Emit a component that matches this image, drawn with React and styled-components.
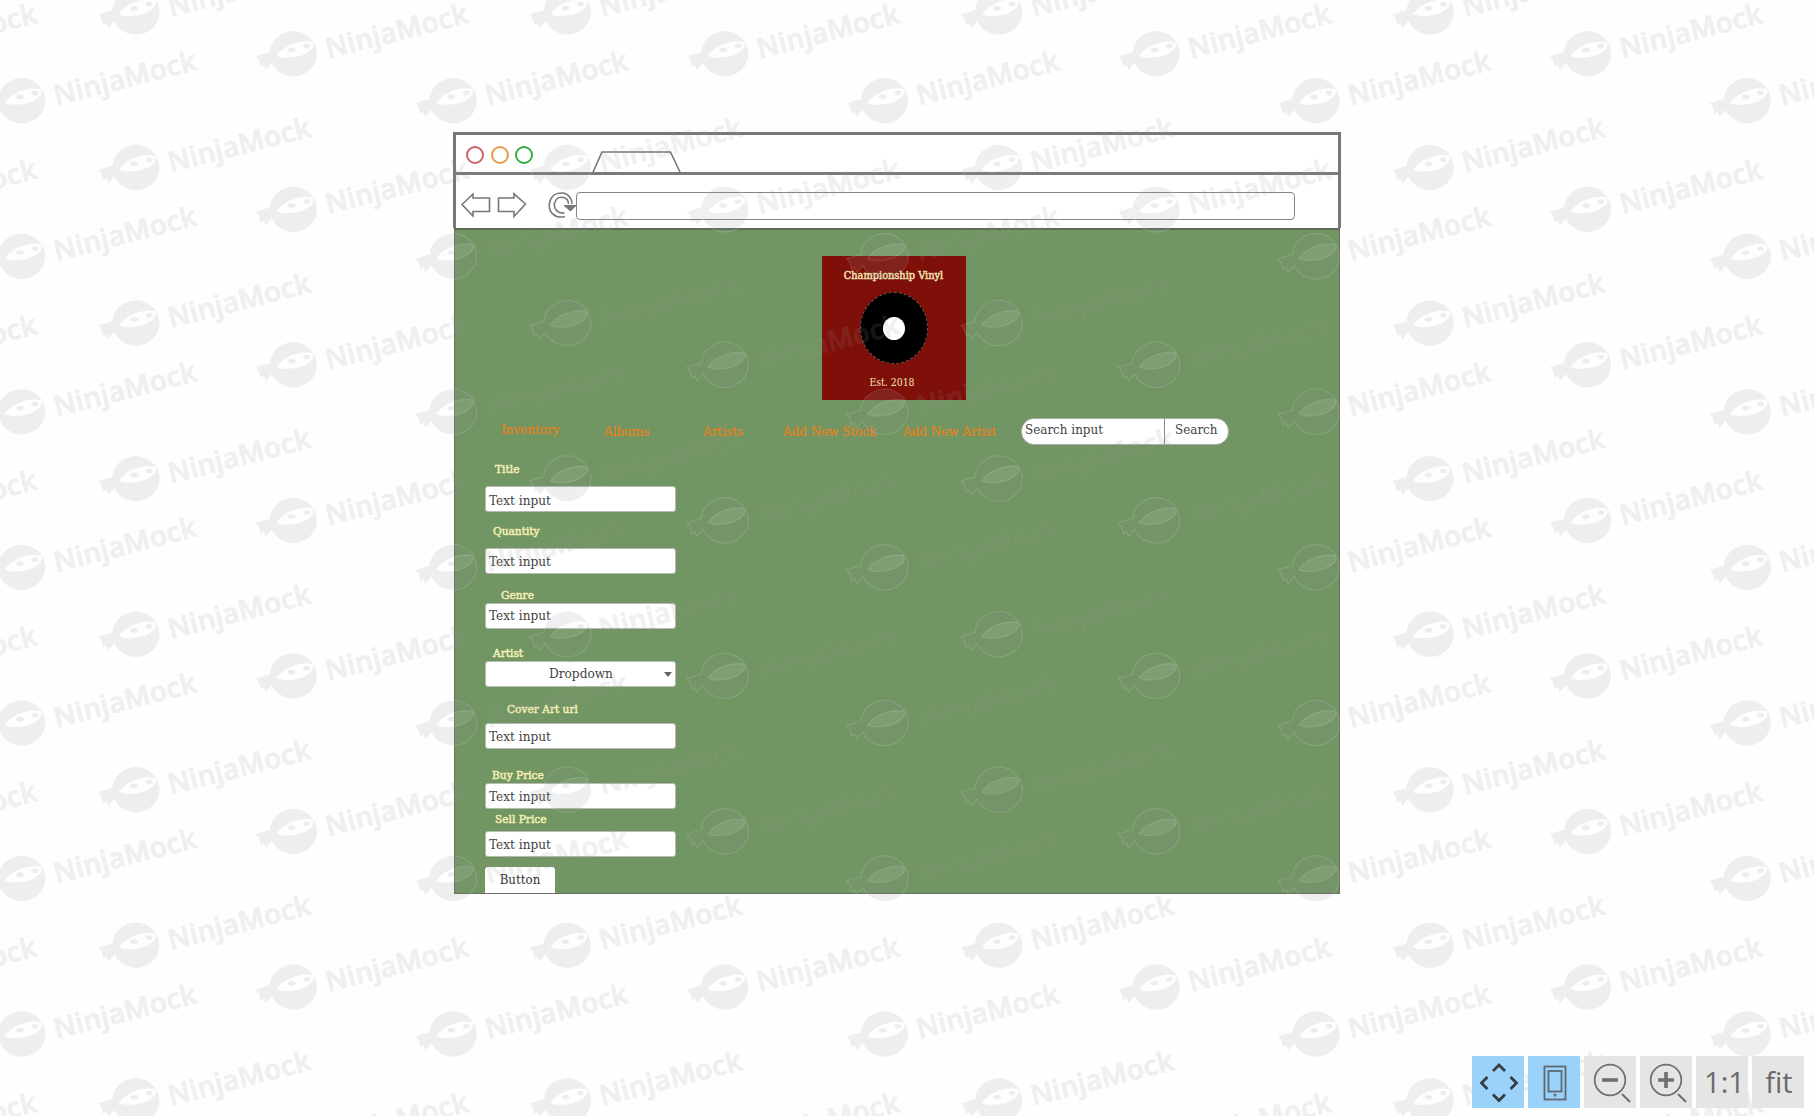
import React from 'react';
import styled, { createGlobalStyle } from 'styled-components';

const serif = '"DejaVu Serif Condensed", "DejaVu Serif", serif';

const GlobalStyle = createGlobalStyle`
  * { box-sizing: border-box; }
  html, body { margin: 0; background: #fefefe; }
  body { overflow: hidden; }
`;

const Page = styled.main`
  position: relative;
  width: 1814px;
  height: 1116px;
  overflow: hidden;
  padding: 132px 0 0 453px;
  font-family: ${serif};
  font-stretch: semi-condensed;
`;

const Browser = styled.section`
  width: 888px;
  display: flex;
  flex-direction: column;
`;

const Chrome = styled.header`
  background: #fff;
  border: 3px solid #777;
  border-bottom: 0;
  height: 96px;
`;

const TabStrip = styled.div`
  height: 40px;
  border-bottom: 3px solid #7b7b7b;
  display: flex;
  align-items: center;
  gap: 6.5px;
  padding: 3px 0 0 10px;
`;

const Dot = styled.span`
  width: 18px;
  height: 18px;
  border-radius: 50%;
  border: 2.5px solid ${(p) => p.$color};
`;

const TabShape = styled.svg`
  width: 90px;
  height: 22px;
  margin-left: 52px;
  align-self: flex-end;
`;

const AddressRow = styled.div`
  height: 53px;
  display: flex;
  align-items: flex-start;
  padding: 17px 0 0 4px;
`;

const NavArrows = styled.svg`
  width: 116px;
  height: 28px;
`;

const AddressBar = styled.div`
  width: 719px;
  height: 28px;
  border: 1.5px solid #858585;
  border-radius: 4px;
`;

const Site = styled.div`
  width: 886px;
  height: 666px;
  margin-left: 1px;
  background: #719563;
  border: 1px solid #657060;
  border-top: 2px solid #5d6b58;
  display: flex;
  flex-direction: column;
  padding: 26px 0 0 30px;
`;

const Logo = styled.div`
  width: 144px;
  height: 144px;
  margin-left: 337px;
  background: #7e0f09;
  color: #f3e3b3;
  display: flex;
  flex-direction: column;
  align-items: center;
`;

const LogoName = styled.div`
  margin: 12px 0 0 -1px;
  font-size: 10.9px;
  line-height: 16px;
  white-space: nowrap;
  -webkit-text-stroke: 0.45px #f3e3b3;
`;

const Record = styled.div`
  width: 68px;
  height: 72px;
  margin-top: 8px;
  border-radius: 50%;
  background: #000;
  border: 1px dashed #6b5b58;
  display: flex;
  align-items: center;
  justify-content: center;
  flex: none;
`;

const RecordHole = styled.span`
  width: 22px;
  height: 23px;
  border-radius: 50%;
  background: #fff;
`;

const LogoYear = styled.div`
  margin: 10px 0 0 -4px;
  font-size: 10.4px;
  line-height: 16px;
`;

const Nav = styled.nav`
  display: grid;
  grid-template-columns: 103px 99px 80px 120px 118px 208px;
  height: 27px;
  margin: 17px 0 0 16px;
  color: #e8811a;
  font-size: 13.3px;
  line-height: 16px;
`;

const NavLink = styled.span`
  padding-top: ${(p) => (p.$raised ? 5 : 7)}px;
  white-space: nowrap;
  -webkit-text-stroke: 0.2px #e8811a;
`;

const SearchBox = styled.div`
  height: 27px;
  margin-top: 1px;
  display: flex;
  background: #fff;
  border: 1px solid #a5b09f;
  border-radius: 13px;
  color: #444;
  overflow: hidden;
`;

const SearchInput = styled.span`
  width: 143px;
  padding: 3px 0 0 3px;
  border-right: 1px solid #888;
`;

const SearchButton = styled.span`
  flex: 1;
  padding: 3px 0 0 10px;
`;

const Form = styled.form`
  display: flex;
  flex-direction: column;
  align-items: flex-start;
  padding-top: 16px;
`;

const Label = styled.label`
  height: 16px;
  padding-top: 1px;
  margin: ${(p) => p.$before}px 0 ${(p) => p.$after}px ${(p) => p.$indent}px;
  font-size: 11.8px;
  line-height: 16px;
  color: #f4efb4;
  -webkit-text-stroke: 0.5px #f4efb4;
  white-space: nowrap;
`;

const Field = styled.div`
  width: 191px;
  height: 26px;
  display: flex;
  align-items: flex-start;
  background: #fff;
  border: 1px solid #b4bdaf;
  border-radius: 3px;
  padding: ${(p) => p.$top}px 3px 0;
  font-size: 13.5px;
  line-height: 16px;
  color: #444;
`;

const DropdownText = styled.span`
  flex: 1;
  padding-left: 60px;
`;

const Caret = styled.span`
  margin: 7px 0 0;
  border: 4.5px solid transparent;
  border-top: 5px solid #666;
  border-bottom: 0;
`;

const SubmitButton = styled.div`
  width: 70px;
  height: 26px;
  margin-top: 10px;
  background: #fff;
  border-radius: 3px 3px 0 0;
  color: #333;
  font-size: 13.2px;
  line-height: 16px;
  padding-top: 5px;
  text-align: center;
`;

const WatermarkLayer = styled.svg`
  position: absolute;
  inset: 0;
  pointer-events: none;
`;

const WatermarkText = styled.text`
  font: 600 28px "Open Sans", "Noto Sans", sans-serif;
  fill: #969696;
  stroke: #969696;
  stroke-width: 0.9px;
  opacity: 0.135;
`;

const Toolbar = styled.div`
  position: absolute;
  right: 10px;
  bottom: 8px;
  display: flex;
  gap: 4px;
`;

const Tool = styled.div`
  width: 52px;
  height: 52px;
  background: ${(p) => (p.$active ? '#9bd2fa' : '#e5e5e5')};
  display: flex;
  align-items: center;
  justify-content: center;
  color: #6a6a6a;
  font: 400 29px/52px "Open Sans", "Noto Sans", sans-serif;
  padding-left: ${(p) => p.$shift || 0}px;
  white-space: nowrap;
`;

const PERIOD_X = 431.4;
const PERIOD_Y = 155.55;
const SEEDS = [[20, 101], [134.2, 167.8], [291.7, 54]];

const marks = [];
for (let col = -1; col < 5; col += 1) {
  for (let row = -2; row < 8; row += 1) {
    SEEDS.forEach(([seedX, seedY]) => {
      const x = seedX + col * PERIOD_X;
      const y = seedY + row * PERIOD_Y;
      if (x > -175 && x < 1850 && y > -20 && y < 1150) {
        marks.push({ x, y, hasText: x < 1775 });
      }
    });
  }
}

const BAND = 'M-15 2C-11 -6 6 -15 21 -12C24 -8 18 -2 11 1C2 4 -8 5 -15 2Z';

function Watermark() {
  return (
    <WatermarkLayer width="1814" height="1116">
      <defs>
        <g id="ninja">
          <path
            d={`M-22 -2L-36 2L-33 6L-31 13L-28 11L-26 16L-20 9A23.7 22.7 0 1 0 -22 -2Z${BAND}`}
            fill="rgba(150,150,150,.15)"
            stroke="rgba(255,255,255,.12)"
            strokeWidth="1.3"
            fillRule="evenodd"
          />
          <path d={BAND} fill="rgba(255,255,255,.1)" />
          <ellipse cx="0" cy="-4" rx="3.8" ry="2.4" fill="rgba(140,140,140,.15)" />
          <ellipse cx="15" cy="-8" rx="3.4" ry="2.4" fill="rgba(140,140,140,.15)" />
        </g>
      </defs>
      {marks.map(({ x, y, hasText }) => (
        <g key={`${x}:${y}`} transform={`translate(${x} ${y})`}>
          <use href="#ninja" />
          {hasText && (
            <WatermarkText transform="translate(36.5 4.5) rotate(-14.3)" textLength="146">
              NinjaMock
            </WatermarkText>
          )}
        </g>
      ))}
    </WatermarkLayer>
  );
}

const FIELDS = [
  { label: 'Title', indent: 10, before: 0, after: 10, top: 5 },
  { label: 'Quantity', indent: 8, before: 10, after: 10, top: 4 },
  { label: 'Genre', indent: 16, before: 12, after: 1, top: 3 },
  { label: 'Artist', indent: 8, before: 15, after: 1, top: 3, dropdown: true },
  { label: 'Cover Art url', indent: 22, before: 13, after: 7, top: 4 },
  { label: 'Buy Price', indent: 7, before: 17, after: 1, top: 4 },
  { label: 'Sell Price', indent: 10, before: 1, after: 5, top: 4 },
];

const Magnifier = ({ plus }) => (
  <svg width="52" height="52" fill="none" stroke="#707070">
    <circle cx="26" cy="24" r="15.3" strokeWidth="1.8" />
    <path d="M38 38L46 46" strokeWidth="2.2" />
    <path d={plus ? 'M18 24H34M26 16V32' : 'M18 24H34'} strokeWidth="3.6" />
  </svg>
);

export default function App() {
  return (
    <Page>
      <GlobalStyle />
      <Browser>
        <Chrome>
          <TabStrip>
            <Dot $color="#cb6468" />
            <Dot $color="#e39b4c" />
            <Dot $color="#35ad42" />
            <TabShape fill="none" stroke="#777" strokeWidth="1.6">
              <path d="M1 22L10 2H78.500L88 22" />
            </TabShape>
          </TabStrip>
          <AddressRow>
            <NavArrows fill="none" stroke="#777" strokeWidth="1.6">
              <path d="M2 12.500L13 2V6H29.500V19.500H13V24ZM38.500 6H54V1.800L65.500 12L54 24.500V19.500H38.500Z" />
              <path d="M105 24.500C95 27 88 20 89.500 11C91 3 97 .5 103 1C109 2 112 7 112 12" />
              <path d="M104.500 21C98 22 93.500 17 94.500 11C96 6 100 4.500 103.500 5.500C107 6.500 108.500 9 108.500 12" />
              <path d="M104 13.500H116L110.500 19Z" fill="#777" strokeWidth="1" />
            </NavArrows>
            <AddressBar />
          </AddressRow>
        </Chrome>
        <Site>
          <Logo>
            <LogoName>Championship Vinyl</LogoName>
            <Record><RecordHole /></Record>
            <LogoYear>Est. 2018</LogoYear>
          </Logo>
          <Nav>
            <NavLink $raised>Inventory</NavLink>
            <NavLink>Albums</NavLink>
            <NavLink>Artists</NavLink>
            <NavLink>Add New Stock</NavLink>
            <NavLink>Add New Artist</NavLink>
            <SearchBox>
              <SearchInput>Search input</SearchInput>
              <SearchButton>Search</SearchButton>
            </SearchBox>
          </Nav>
          <Form>
            {FIELDS.map((f) => (
              <React.Fragment key={f.label}>
                <Label $indent={f.indent} $before={f.before} $after={f.after}>{f.label}</Label>
                <Field $top={f.top}>
                  {f.dropdown ? (
                    <>
                      <DropdownText>Dropdown</DropdownText>
                      <Caret />
                    </>
                  ) : 'Text input'}
                </Field>
              </React.Fragment>
            ))}
            <SubmitButton>Button</SubmitButton>
          </Form>
        </Site>
      </Browser>
      <Watermark />
      <Toolbar>
        <Tool $active>
          <svg width="52" height="52" fill="none" stroke="#343d44" strokeWidth="2.8">
            <path d="M21 15L27 9L33 15M21 38.500L27 44.500L33 38.500M15.500 21L9.500 27L15.500 33M38.500 21L44.500 27L38.500 33" />
          </svg>
        </Tool>
        <Tool $active>
          <svg width="52" height="52" fill="none" stroke="#5e686e" strokeWidth="1.8">
            <rect x="16.500" y="10.500" width="21" height="33" />
            <rect x="20.500" y="15" width="13" height="20.500" />
            <circle cx="27" cy="39" r=".6" />
          </svg>
        </Tool>
        <Tool><Magnifier /></Tool>
        <Tool><Magnifier plus /></Tool>
        <Tool $shift={5}>1:1</Tool>
        <Tool $shift={2}>fit</Tool>
      </Toolbar>
    </Page>
  );
}
